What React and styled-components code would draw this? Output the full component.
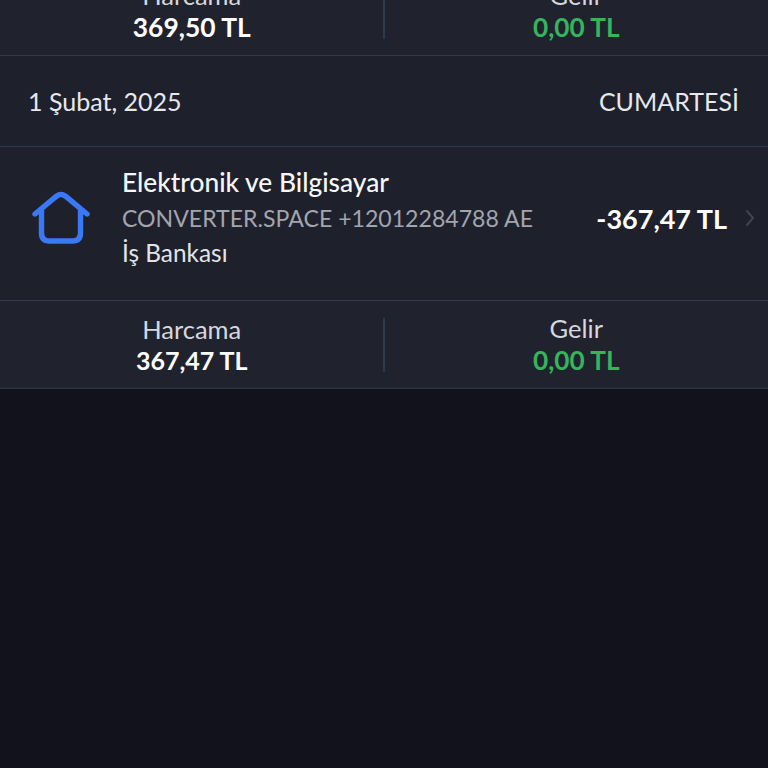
import React from 'react'
import styled, { createGlobalStyle } from 'styled-components'

const GlobalStyle = createGlobalStyle`
  html, body {
    margin: 0;
    height: 100%;
    overflow: hidden;
    background: #12121c;
  }
`

const Summary = ({ spent, income, size }) => (
  <SummaryRow>
    <SummaryCell>
      <SummaryLabel>Harcama</SummaryLabel>
      <SummaryValue $size={size}>{spent}</SummaryValue>
    </SummaryCell>
    <SummaryDivider />
    <SummaryCell>
      <SummaryLabel>Gelir</SummaryLabel>
      <SummaryValue $income $size={26.2}>{income}</SummaryValue>
    </SummaryCell>
  </SummaryRow>
)

const HomeIcon = () => (
  <svg width='58' height='54' viewBox='0 0 58 54' fill='none'>
    <path
      d='M3 23 L24.5 5.2 Q29 2 33.5 5.2 L55 23'
      stroke='#3b78f6'
      strokeWidth='5.4'
      strokeLinecap='round'
      strokeLinejoin='round'
    />
    <path
      d='M9.5 19 V42 Q9.5 50 17.5 50 H40.5 Q48.5 50 48.5 42 V19'
      stroke='#3b78f6'
      strokeWidth='5.4'
      strokeLinecap='round'
    />
  </svg>
)

const Chevron = () => (
  <svg width='10' height='18' viewBox='0 0 10 18' fill='none'>
    <path d='M2 2 L8 9 L2 16' stroke='#3f4450' strokeWidth='2' strokeLinecap='round' strokeLinejoin='round' />
  </svg>
)

const App = () => (
  <Page>
    <GlobalStyle />
    <Summary spent='369,50 TL' income='0,00 TL' size={26.4} />
    <DateRow>
      <DateText>1 Şubat, 2025</DateText>
      <DateText>CUMARTESİ</DateText>
    </DateRow>
    <Transaction>
      <IconWrap>
        <HomeIcon />
      </IconWrap>
      <Details>
        <Category>Elektronik ve Bilgisayar</Category>
        <Merchant>CONVERTER.SPACE +12012284788 AE</Merchant>
        <Bank>İş Bankası</Bank>
      </Details>
      <Amount>-367,47 TL</Amount>
      <ChevronWrap>
        <Chevron />
      </ChevronWrap>
    </Transaction>
    <Summary spent='367,47 TL' income='0,00 TL' size={25} />
  </Page>
)

const Page = styled.div`
  margin-top: -32px;
  font-family: 'Lato', 'Noto Sans', sans-serif;
  color: #eef0f4;
`

const SummaryRow = styled.div`
  display: grid;
  grid-template-columns: 1fr 1px 1fr;
  align-items: center;
  height: 87px;
  background: #20222e;
  border-bottom: 1px solid #2c3a4d;
`

const SummaryCell = styled.div`
  display: flex;
  flex-direction: column;
  align-items: center;
  gap: 1px;
`

const SummaryLabel = styled.div`
  font-size: 25.5px;
  line-height: 30px;
  color: #d6d8dd;
`

const SummaryValue = styled.div`
  font-size: ${props => props.$size}px;
  line-height: ${props => Math.round(props.$size * 1.25)}px;
  font-weight: 700;
  color: ${props => (props.$income ? '#35b45c' : '#ffffff')};
`

const SummaryDivider = styled.div`
  width: 2px;
  height: 54px;
  margin-left: -1px;
  background: #2c3a4d;
`

const DateRow = styled.div`
  display: flex;
  justify-content: space-between;
  align-items: center;
  height: 90px;
  padding: 0 29px 0 28px;
  background: #1e202b;
  border-bottom: 1px solid #2c3a4d;
`

const DateText = styled.div`
  font-size: 25px;
  color: #e6e8ec;
`

const Transaction = styled.div`
  display: flex;
  align-items: center;
  box-sizing: border-box;
  height: 154px;
  padding-bottom: 11px;
  background: #1e202b;
  border-bottom: 1px solid #2c3a4d;
`

const IconWrap = styled.div`
  display: flex;
  justify-content: center;
  width: 122px;
`

const Details = styled.div`
  display: flex;
  flex-direction: column;
  gap: 1px;
  flex: 1;
`

const Category = styled.div`
  font-size: 26.3px;
  line-height: 35px;
  font-weight: 500;
  color: #f6f7f9;
`

const Merchant = styled.div`
  font-size: 23.1px;
  line-height: 35px;
  color: #a2a5ad;
`

const Bank = styled.div`
  font-size: 24.4px;
  line-height: 35px;
  margin: -2px 0 2px;
  color: #e2e4e8;
`

const Amount = styled.div`
  font-size: 27px;
  font-weight: 700;
  color: #ffffff;
`

const ChevronWrap = styled.div`
  display: flex;
  align-items: center;
  padding: 0 13px 0 18px;
`

export default App
